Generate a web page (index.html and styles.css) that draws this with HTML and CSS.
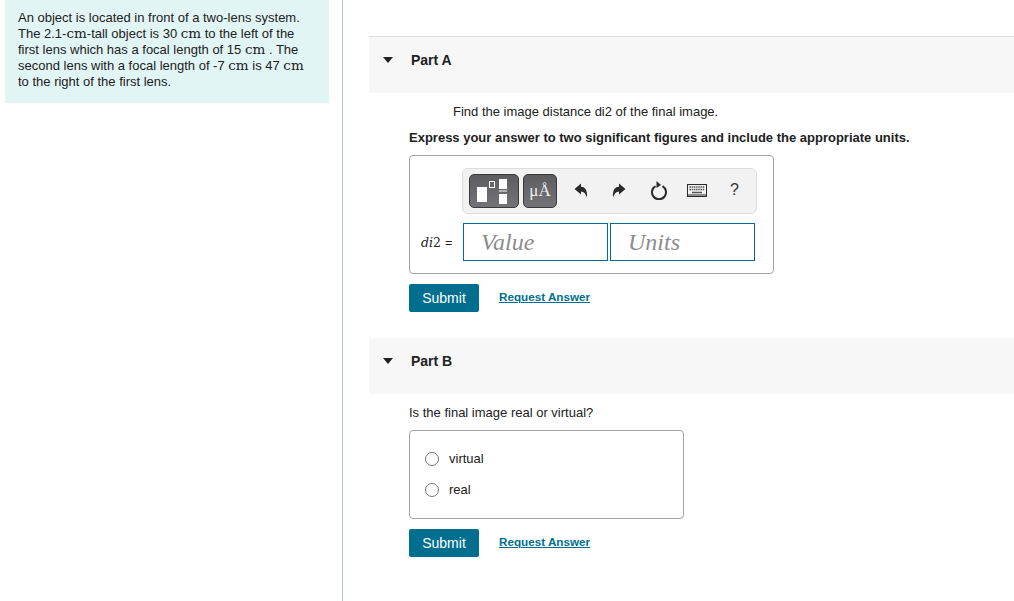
FILE: index.html
```html
<!DOCTYPE html>
<html lang="en">
<head>
    <meta charset="UTF-8">
    <meta name="viewport" content="width=device-width, initial-scale=1.0">
    <title>Two-Lens System</title>
    <link rel="stylesheet" href="styles.css">
</head>
<body>
    <!-- Problem statement -->
    <aside class="intro-col">
        <div class="intro">
            An object is located in front of a two-lens system.<br>
            The 2.1-<span class="unit">cm</span>-tall object is 30 <span class="unit">cm</span> to the left of the<br>
            first lens which has a focal length of 15 <span class="unit">cm</span> . The<br>
            second lens with a focal length of -7 <span class="unit">cm</span> is 47 <span class="unit">cm</span><br>
            to the right of the first lens.
        </div>
    </aside>

    <main class="parts">
        <!-- Part A -->
        <section class="part part-a">
            <div class="part-head">
                <span class="caret"></span>
                <h2>Part A</h2>
            </div>
            <div class="part-body">
                <p class="question centered">Find the image distance di2 of the final image.</p>
                <p class="instruction">Express your answer to two significant figures and include the appropriate units.</p>

                <div class="answer-box">
                    <div class="toolbar">
                        <button type="button" class="tool-btn template-btn" aria-label="Templates">
                            <svg width="30" height="25" viewBox="0 0 30 25">
                                <rect x="0" y="8" width="10" height="15" fill="#fff"/>
                                <rect x="12.500" y="2.500" width="5" height="6" fill="none" stroke="#fff"/>
                                <rect x="22" y="0" width="8" height="10" fill="#fff"/>
                                <rect x="22" y="11.500" width="8" height="1" fill="#fff"/>
                                <rect x="22" y="15" width="8" height="10" fill="#fff"/>
                            </svg>
                        </button>
                        <button type="button" class="tool-btn symbol-btn">μÅ</button>
                        <div class="tool-icons">
                            <svg width="14" height="15" viewBox="0 0 14 15">
                                <path d="M0.500 6 7 0.500V3.800C11 3.800 13.500 7 13 14.500 11.500 10.500 10 8.500 7 8.500V11.500Z" fill="#2b2b2b"/>
                            </svg>
                            <svg width="14" height="15" viewBox="0 0 14 15">
                                <path d="M13.500 6 7 0.500V3.800C3 3.800 0.500 7 1 14.500 2.500 10.500 4 8.500 7 8.500V11.500Z" fill="#2b2b2b"/>
                            </svg>
                            <svg width="18" height="20" viewBox="0 0 18 20">
                                <path d="M5.500 6.200A7 7 0 1 0 12.500 6.200" fill="none" stroke="#2b2b2b" stroke-width="2"/>
                                <path d="M6.500 1 11 5 6.500 8Z" fill="#2b2b2b"/>
                            </svg>
                            <svg width="20" height="13" viewBox="0 0 20 13">
                                <rect x="0.500" y="0.500" width="19" height="12" fill="#f2f2f2" stroke="#2b2b2b"/>
                                <path d="M2.500 3H17.500M2.500 5.500H17.500" stroke="#555" stroke-width="1.500" stroke-dasharray="1.500 0.700"/>
                                <path d="M5 8.500H15" stroke="#555" stroke-width="1.500"/>
                                <path d="M1 11H19" stroke="#2b2b2b"/>
                            </svg>
                            <span class="help">?</span>
                        </div>
                    </div>
                    <div class="input-row">
                        <span class="var-label"><i>di</i>2 <span class="equals">=</span></span>
                        <input class="math-input value-input" type="text" placeholder="Value">
                        <input class="math-input units-input" type="text" placeholder="Units">
                    </div>
                </div>

                <div class="actions">
                    <button type="button" class="submit">Submit</button>
                    <a href="#" class="request">Request Answer</a>
                </div>
            </div>
        </section>

        <!-- Part B -->
        <section class="part part-b">
            <div class="part-head">
                <span class="caret"></span>
                <h2>Part B</h2>
            </div>
            <div class="part-body">
                <p class="question">Is the final image real or virtual?</p>

                <div class="choice-box">
                    <label class="choice"><input type="radio" name="kind"><span>virtual</span></label>
                    <label class="choice"><input type="radio" name="kind"><span>real</span></label>
                </div>

                <div class="actions">
                    <button type="button" class="submit">Submit</button>
                    <a href="#" class="request">Request Answer</a>
                </div>
            </div>
        </section>
    </main>
</body>
</html>
```

FILE: styles.css
```css
/* General Styling */
body {
    font-family: 'Liberation Sans', Arial, sans-serif;
    margin: 0;
    padding: 0;
    background: white;
    color: #212121;
    font-size: 13px;
    display: flex;
    height: 601px;
    overflow: hidden;
}

/* Problem statement */
.intro-col {
    width: 343px;
    flex: none;
    box-sizing: border-box;
    padding-left: 5px;
    border-right: 1px solid #a9c4d6;
}

.intro {
    width: 324px;
    height: 103px;
    box-sizing: border-box;
    padding: 10px 0 0 13px;
    background: #e2f5f5;
    line-height: 16px;
}

.unit {
    font-family: 'DejaVu Serif', 'Liberation Serif', serif;
    font-size: 13.5px;
    line-height: 1;
}

/* Parts */
.parts {
    flex: 1;
    margin-left: 26px;
    padding-top: 36px;
}

.part-head {
    display: flex;
    align-items: center;
    background: #f7f7f7;
    padding-left: 14px;
    padding-bottom: 10px;
    box-sizing: border-box;
}

.part-a .part-head {
    height: 57px;
    border-top: 1px solid #dddddd;
}

.part-b .part-head {
    height: 56px;
}

.part-b {
    margin-top: 26px;
}

.part-head h2 {
    margin: 0 0 0 18px;
    font-size: 14px;
    font-weight: bold;
}

.caret {
    width: 0;
    height: 0;
    border-left: 5px solid transparent;
    border-right: 5px solid transparent;
    border-top: 6px solid #212121;
}

.part-body {
    padding: 11px 0 0 40px;
}

.question {
    margin: 0;
    line-height: 16px;
}

.question.centered {
    padding-left: 44px;
}

.instruction {
    margin: 10px 0 0;
    font-weight: bold;
    line-height: 16px;
}

/* Answer box */
.answer-box {
    width: 365px;
    height: 119px;
    box-sizing: border-box;
    margin-top: 9px;
    padding: 12px 0 0 52px;
    border: 1px solid #a3a3a3;
    border-radius: 4px;
}

.toolbar {
    width: 295px;
    height: 46px;
    box-sizing: border-box;
    display: flex;
    align-items: center;
    padding-left: 6px;
    gap: 4px;
    background: #f2f2f2;
    border: 1px solid #dddddd;
    border-radius: 6px;
}

.tool-btn {
    height: 34px;
    padding: 0;
    display: flex;
    align-items: center;
    justify-content: center;
    background: linear-gradient(#5c5c61, #737378);
    border: 1px solid #3a3a3a;
    border-radius: 5px;
}

.template-btn {
    width: 50px;
    padding-right: 4px;
}

.symbol-btn {
    width: 34px;
    color: #f0f0f0;
    font-family: 'Liberation Serif', serif;
    font-size: 17px;
}

.tool-icons {
    display: flex;
    align-items: center;
    margin-left: 13px;
    padding-bottom: 2px;
}

.tool-icons svg:nth-child(1) {
    margin-right: 24px;
}

.tool-icons svg:nth-child(2) {
    margin-right: 24px;
}

.tool-icons svg:nth-child(3) {
    margin-right: 19px;
}

.help {
    margin-left: 23px;
    font-size: 16px;
    color: #333;
}

.input-row {
    display: flex;
    align-items: center;
    margin-top: 9px;
    margin-left: -41px;
}

.var-label {
    width: 42px;
    font-family: 'DejaVu Serif', serif;
    font-size: 12.5px;
    white-space: nowrap;
}

.equals {
    font-family: 'Liberation Sans', Arial, sans-serif;
}

.math-input {
    height: 38px;
    box-sizing: border-box;
    margin: 0;
    border: 1px solid #006f8f;
    background: white;
    font-family: 'Liberation Serif', serif;
    font-style: italic;
    font-size: 24px;
    outline: none;
}

.math-input::placeholder {
    color: #8c8c8c;
    opacity: 1;
}

.value-input {
    width: 145px;
    padding-left: 17px;
}

.units-input {
    width: 145px;
    margin-left: 2px;
    padding-left: 17px;
}

/* Buttons */
.actions {
    display: flex;
    align-items: center;
    margin-top: 10px;
}

.submit {
    width: 70px;
    height: 28px;
    padding: 0;
    background: #006f8f;
    color: white;
    border: none;
    border-radius: 2px;
    font-family: 'Liberation Sans', Arial, sans-serif;
    font-size: 14px;
}

.request {
    margin: 0 0 4px 20px;
    color: #006f8f;
    font-size: 11.7px;
    font-weight: bold;
}

/* Multiple choice */
.choice-box {
    width: 275px;
    height: 89px;
    box-sizing: border-box;
    margin-top: 9px;
    padding: 12px 0 0 15px;
    border: 1px solid #a3a3a3;
    border-radius: 4px;
}

.choice {
    display: flex;
    align-items: center;
    height: 31px;
}

.choice input {
    width: 14px;
    height: 14px;
    margin: 0 10px 0 0;
}
```
